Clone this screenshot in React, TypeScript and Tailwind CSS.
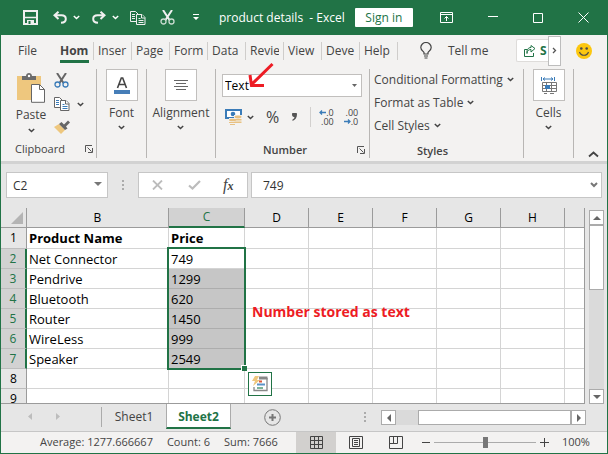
import type { ReactNode } from "react";

const rows = [
  { n: 1, b: "Product Name", c: "Price" },
  { n: 2, b: "Net Connector", c: "749" },
  { n: 3, b: "Pendrive", c: "1299" },
  { n: 4, b: "Bluetooth", c: "620" },
  { n: 5, b: "Router", c: "1450" },
  { n: 6, b: "WireLess", c: "999" },
  { n: 7, b: "Speaker", c: "2549" },
  { n: 8, b: "", c: "" },
  { n: 9, b: "", c: "" },
];
const emptyColumns = ["D", "E", "F", "G", "H", ""];
const menuTabs = ["Hom", "Inser", "Page", "Form", "Data", "Revie", "View", "Deve", "Help"];

function Chevron({ className = "" }: { className?: string }) {
  return (
    <svg className={`shrink-0 ${className}`} width="7" height="5" viewBox="0 0 7 5" fill="none" stroke="currentColor" strokeWidth="1.5">
      <path d="M.8 1l2.7 2.5L6.2 1" />
    </svg>
  );
}

function Launcher() {
  return (
    <button aria-label="More options" className="text-[#555]">
      <svg width="8" height="8" viewBox="0 0 8 8" fill="none" stroke="currentColor">
        <path d="M.5 7V.5H7M2.5 2.5l4 4M7.5 3v4.5H3" />
      </svg>
    </button>
  );
}

function Dots() {
  return (
    <svg width="2" height="11" viewBox="0 0 2 11" fill="#ababab">
      <path d="M0 0h2v2H0zM0 4h2v2H0zM0 8h2v2H0z" />
    </svg>
  );
}

function Undo({ flip = false }: { flip?: boolean }) {
  return (
    <svg className={flip ? "-scale-x-100" : ""} width="14" height="13" viewBox="0 0 14 13" fill="none" stroke="#f0f0f0" strokeWidth="2">
      <path d="M5.500.7L1.500 4.300l4 3.700M2 4.300h6.500c3 0 4.300 1.600 4.300 3.600S11.300 11.500 8 11.800" />
    </svg>
  );
}

function Scissors({ blades, rings }: { blades: string; rings: string }) {
  return (
    <svg width="15" height="15" viewBox="0 0 15 15" fill="none">
      <path d="M3 0l6.500 10M12 0L5.500 10" stroke={blades} strokeWidth="2" />
      <circle cx="3.500" cy="11.500" r="2.500" stroke={rings} strokeWidth="1.300" />
      <circle cx="11.500" cy="11.500" r="2.500" stroke={rings} strokeWidth="1.300" />
    </svg>
  );
}

function Copy({ line, text, paper }: { line: string; text: string; paper: string }) {
  return (
    <svg width="16" height="14" viewBox="0 0 16 14" fill={paper} stroke={line}>
      <path d="M.5.500h5l2.500 2.500v7.500H.500z" />
      <path d="M6.500 3.500h5.500l3 3v7H6.500z" />
      <path d="M11.500 3.500v3.500H15" />
      <path d="M2 3.500h3M2 5.500h3M2 7.500h3M8.500 7.500h2M8.500 9.500h5M8.500 11.500h5" stroke={text} />
    </svg>
  );
}

function TitleBar() {
  return (
    <header className="flex h-[35px] shrink-0 items-center bg-[#217346] text-white">
      <div className="flex w-[218px] shrink-0 items-center pl-[22px]">
        <button aria-label="Save">
          <svg width="15" height="15" viewBox="0 0 15 15" fill="none" stroke="#f0f0f0" strokeWidth="2">
            <path d="M1 1h13v13H1z" />
            <path d="M1 7.500h13" strokeWidth="1.500" />
            <path d="M4 14v-4h7v4z" fill="#f0f0f0" stroke="none" />
            <path d="M5.500 11h2v3h-2z" fill="#217346" stroke="none" />
          </svg>
        </button>
        <button aria-label="Undo" className="ml-[15px]"><Undo /></button>
        <Chevron className="ml-1.5" />
        <button aria-label="Redo" className="ml-3"><Undo flip /></button>
        <Chevron className="ml-1.5" />
        <button aria-label="Copy" className="ml-[11px]"><Copy line="#f0f0f0" text="#f0f0f0" paper="#217346" /></button>
        <button aria-label="Cut" className="ml-[14px]"><Scissors blades="#f0f0f0" rings="#c9dcd0" /></button>
        <button aria-label="Customize toolbar" className="ml-[18px]">
          <svg width="6" height="7" viewBox="0 0 6 7" fill="#fff"><path d="M0 0h6v1H0zM0 3h6L3 6z" /></svg>
        </button>
      </div>
      <h1 className="text-[12px] whitespace-pre">product details  - Excel</h1>
      <button className="ml-[10px] h-[19px] w-[58px] shrink-0 rounded-[1px] bg-white text-[12px] leading-[19px] text-[#217346]">Sign in</button>
      <div className="ml-auto flex shrink-0 items-center pr-[18px]">
        <button aria-label="Ribbon display options">
          <svg width="13" height="11" viewBox="0 0 13 11" fill="none" stroke="#fff"><path d="M.5.500h12v10H.500zM.500 2.500h12M6.500 9V4.500M4.500 6.500l2-2 2 2" /></svg>
        </button>
        <button aria-label="Minimize" className="ml-[35px]">
          <svg width="10" height="11" viewBox="0 0 10 11" stroke="#fff"><path d="M0 4.500h10" /></svg>
        </button>
        <button aria-label="Maximize" className="ml-[35px]">
          <svg width="10" height="10" viewBox="0 0 10 10" fill="none" stroke="#fff"><path d="M.5.500h9v9H.500z" /></svg>
        </button>
        <button aria-label="Close" className="ml-[35px]">
          <svg width="11" height="11" viewBox="0 0 11 11" stroke="#fff"><path d="M.5.500l10 10M10.500.500l-10 10" /></svg>
        </button>
      </div>
    </header>
  );
}

function MenuBar() {
  return (
    <nav className="flex h-[31px] shrink-0 items-center bg-[#f3f2f1] text-[12px] text-[#444]">
      <button className="w-[55px] shrink-0 pl-[17px] text-left">File</button>
      <div className="flex shrink-0">
        {menuTabs.map((tab, i) => (
          <button key={tab} className="flex h-[18px] w-[38px] shrink-0 items-center border-r border-[#cfcdcb] px-1 whitespace-nowrap">
            <span className={i === 0 ? "h-6 w-[29px] overflow-hidden border-b-3 border-[#217346] text-left leading-[24px] font-bold" : "w-[30px] overflow-hidden text-left"}>{tab}</span>
          </button>
        ))}
      </div>
      <svg className="ml-[22px] shrink-0" width="12" height="17" viewBox="0 0 12 17" fill="none" stroke="#444" strokeWidth="1.200">
        <path d="M4 12V10.500C3 9 .8 8 .8 5.500a5.200 5 0 0 1 10.400 0C11.200 8 9 9 8 10.500V12zM4 14h4M4.500 16h3" />
      </svg>
      <button className="ml-4 shrink-0">Tell me</button>
      <div className="ml-auto flex shrink-0 items-center pr-[15px]">
        <button className="flex h-[23px] w-8 items-center gap-1 overflow-hidden rounded-l-[2px] border border-r-0 border-[#dedcda] bg-white pl-[7px] font-bold text-[#217346]">
          <svg className="shrink-0" width="12" height="12" viewBox="0 0 12 12" fill="none" stroke="currentColor">
            <path d="M3 4.500H.500v7h9V8M3 8.500c0-3 2-4 4-4V7l4-3.500L7 .5v2C4 2.500 2.500 5 3 8.500z" />
          </svg>
          S
        </button>
        <button aria-label="Scroll tabs" className="flex h-[30px] w-[13px] items-center justify-center border border-[#bdbdbd] bg-white">
          <svg width="5" height="7" viewBox="0 0 5 7" fill="none" stroke="#555" strokeWidth="1.300"><path d="M1 1l2.500 2.500L1 6" /></svg>
        </button>
        <svg className="ml-[15px]" width="16" height="16" viewBox="0 0 16 16">
          <circle cx="8" cy="8" r="8" fill="#fcc70f" />
          <circle cx="5.300" cy="5.500" r="1.300" fill="#4a4a4a" />
          <circle cx="10.700" cy="5.500" r="1.300" fill="#4a4a4a" />
          <path d="M3.500 9c1.500 4.300 7.500 4.300 9 0" fill="none" stroke="#4a4a4a" strokeWidth="1.200" />
        </svg>
      </div>
    </nav>
  );
}

function LargeButton({ label, children }: { label: string; children: ReactNode }) {
  return (
    <button className="flex flex-col items-center">
      <span className="flex size-8 items-center justify-center border border-[#c1bfbd] bg-white">{children}</span>
      <span className="mt-[3px] leading-[17px]">{label}</span>
      <Chevron className="mt-1" />
    </button>
  );
}

function Ribbon() {
  return (
    <section className="flex h-[95px] shrink-0 bg-[#f3f2f1] pt-[3px] pb-[3px] text-[12px] text-[#444]">
      <div className="flex w-24 shrink-0 flex-col border-r border-[#b8b6b4]">
        <div className="flex flex-1 pl-[15px]">
          <button className="flex w-[30px] flex-col items-center pt-1">
            <svg width="28" height="30" viewBox="0 0 28 30">
              <path d="M0 3h24v24H0z" fill="#eec77e" />
              <path d="M5 7V3h4c0-4 6-4 6 0h4v4z" fill="#6b6b6b" />
              <circle cx="12" cy="3" r="1.200" fill="#fff" />
              <path d="M14.500 11.500h8l5 5v12.800h-13z" fill="#fff" stroke="#666" />
              <path d="M22.500 11.500v5h5" fill="none" stroke="#666" />
            </svg>
            <span className="mt-[3px] leading-[17px]">Paste</span>
            <Chevron className="mt-[5px]" />
          </button>
          <div className="ml-2 flex flex-col gap-[9px] pt-1">
            <button aria-label="Cut"><Scissors blades="#666" rings="#3b7cb8" /></button>
            <button aria-label="Copy" className="flex items-center gap-[7px]"><Copy line="#666" text="#3b7cb8" paper="#fff" /><Chevron /></button>
            <button aria-label="Format painter">
              <svg width="16" height="14" viewBox="0 0 16 14">
                <path d="M0 7l5-3 6 6-4 4z" fill="#eec77e" />
                <path d="M5 4l2.500-2L10 4.500 14 .5l2 2-4 4 1.500 2L11 10z" fill="#666" />
              </svg>
            </button>
          </div>
        </div>
        <div className="flex h-[18px] items-center justify-between pr-[3px] pl-3.5 text-[11px] leading-[16px]">Clipboard<Launcher /></div>
      </div>
      <div className="flex w-[50px] shrink-0 justify-center border-r border-[#b8b6b4]">
        <LargeButton label="Font">
          <svg width="16" height="17" viewBox="0 0 16 17">
            <path d="M3.500 11L7.300 1h1.400l3.800 10M5 7.500h6" fill="none" stroke="#444" strokeWidth="1.600" />
            <path d="M0 13h16v4H0z" fill="#467eb8" />
          </svg>
        </LargeButton>
      </div>
      <div className="flex w-[69px] shrink-0 justify-center border-r border-[#b8b6b4]">
        <LargeButton label="Alignment">
          <svg width="14" height="11" viewBox="0 0 14 11" stroke="#666"><path d="M0 .5h14M2 3.500h10M0 6.500h14M2 9.500h10" /></svg>
        </LargeButton>
      </div>
      <div className="flex w-[154px] shrink-0 flex-col border-r border-[#b8b6b4] pt-[5px]">
        <div className="relative ml-1.5 w-[140px]">
          <select aria-label="Number format" className="block h-[23px] w-full appearance-none rounded-none border border-[#c1bfbd] bg-white pl-0.5 text-[12px] text-black">
            <option>Text</option>
          </select>
          <svg className="pointer-events-none absolute top-[10px] right-[5px]" width="5" height="3" viewBox="0 0 5 3" fill="#666"><path d="M0 0h5L2.500 3z" /></svg>
          <svg className="pointer-events-none absolute -top-3 left-[25px]" width="28" height="28" viewBox="0 0 28 28" fill="none" stroke="#ed1c24" strokeWidth="3">
            <path d="M25.500 2L5 22M3 13l1.500 10.500L17 23.500" />
          </svg>
        </div>
        <div className="mt-2 flex h-6 items-center pl-[9px]">
          <button aria-label="Accounting format">
            <svg width="17" height="16" viewBox="0 0 17 16">
              <path d="M1 1h15v8H1z" fill="#fff" stroke="#3b7cb8" strokeWidth="2" />
              <circle cx="8" cy="5" r="2.300" fill="#3b7cb8" />
              <path d="M9 6h8v10H9zM4 9h9v7H4z" fill="#f3f2f1" />
              <g fill="#e8c182"><ellipse cx="13" cy="8" rx="3.500" ry="1.400" /><path d="M9.500 10h7v1.500h-7zM9.500 12.500h7V14h-7z" /><ellipse cx="7.500" cy="11" rx="3.500" ry="1.300" /><path d="M4 13h7v1H4zM5 15h5v1H5z" /></g>
            </svg>
          </button>
          <Chevron className="ml-[5px]" />
          <button className="ml-3 text-[16px]" aria-label="Percent style">%</button>
          <button aria-label="Comma style" className="ml-[13px]">
            <svg width="5" height="8" viewBox="0 0 5 8" fill="#555"><path d="M0 1.500a2.400 2.400 0 0 1 5 0C5 5 3 7 .5 8V6.500C2 5.500 2.500 5 2.300 4 1 4.300 0 3 0 1.500z" /></svg>
          </button>
          <span className="ml-[13px] h-5 w-px bg-[#d2d0ce]" />
          <button aria-label="Increase decimal" className="ml-2 flex flex-col items-end text-[9px] leading-[9px]">
            <span className="flex items-center"><svg width="7" height="5" viewBox="0 0 7 5" fill="none" stroke="#3b7cb8" strokeWidth="1.300"><path d="M7 2.500H1M3 .5l-2 2 2 2" /></svg>.0</span>
            <span>.00</span>
          </button>
          <button aria-label="Decrease decimal" className="ml-[10px] flex flex-col items-end text-[9px] leading-[9px]">
            <span>.00</span>
            <span className="flex items-center"><svg width="7" height="5" viewBox="0 0 7 5" fill="none" stroke="#3b7cb8" strokeWidth="1.300"><path d="M0 2.500h6M4 .5l2 2-2 2" /></svg>.0</span>
          </button>
        </div>
        <div className="mt-auto flex h-4 items-center pr-1 pl-[47px] text-[11px] leading-[16px] font-semibold">
          <span className="flex-1">Number</span><Launcher />
        </div>
      </div>
      <div className="flex w-[154px] shrink-0 flex-col border-r border-[#b8b6b4]">
        <div className="flex flex-col items-start gap-[6px] pt-0.5 pl-1">
          {["Conditional Formatting", "Format as Table", "Cell Styles"].map((label) => (
            <button key={label} className="flex items-center gap-1 leading-[17px] whitespace-nowrap">{label}<Chevron /></button>
          ))}
        </div>
        <div className="mt-auto pr-7 text-center text-[11px] leading-[14px] font-semibold">Styles</div>
      </div>
      <div className="flex w-[50px] shrink-0 justify-center border-r border-[#b8b6b4]">
        <LargeButton label="Cells">
          <svg width="16" height="17" viewBox="0 0 16 17" fill="none">
            <path d="M.5 0v4M13.500 0v4M2 2h10M4 .500L2 2l2 1.500M10 .500L12 2l-2 1.500" stroke="#3b7cb8" />
            <path d="M1.500 5.500h14v9h-14zM1.500 8.500h14M1.500 11.500h14M5.500 5v9M10.500 5v9M3 16.500h3M9 16.500h4" stroke="#777" />
            <path d="M4 8h5v4H4z" fill="#3b7cb8" />
          </svg>
        </LargeButton>
      </div>
      <div className="flex flex-1 items-end justify-end pr-2">
        <button aria-label="Collapse ribbon">
          <svg width="11" height="8" viewBox="0 0 11 8" fill="none" stroke="#444" strokeWidth="1.800"><path d="M1 6.500l4.500-4 4.500 4" /></svg>
        </button>
      </div>
    </section>
  );
}

function FormulaBar() {
  return (
    <div className="flex h-[47px] shrink-0 items-start border-t-3 border-[#d2d2d2] bg-[#e6e6e6] pt-2 pr-[5px] pl-[5px] text-[12px] text-[#333]">
      <div className="relative w-[102px] shrink-0">
        <input aria-label="Name box" defaultValue="C2" className="block h-[26px] w-full border border-[#c6c6c6] bg-white px-1.5 outline-none" />
        <svg className="absolute top-[10px] right-[6px]" width="8" height="4" viewBox="0 0 8 4" fill="#777"><path d="M0 0h8L4 4z" /></svg>
      </div>
      <div className="flex h-[26px] w-[30px] shrink-0 items-center justify-center"><Dots /></div>
      <div className="flex h-[26px] w-[110px] shrink-0 items-center border border-[#c6c6c6] bg-white pl-[13px]">
        <button aria-label="Cancel"><svg width="11" height="10" viewBox="0 0 11 10" stroke="#bcbcbc" strokeWidth="1.800"><path d="M1 .5l9 9M10 .5l-9 9" /></svg></button>
        <button aria-label="Enter" className="ml-[25px]"><svg width="13" height="10" viewBox="0 0 13 10" fill="none" stroke="#bcbcbc" strokeWidth="2.200"><path d="M1 5.500l3.500 3L12 1" /></svg></button>
        <button aria-label="Insert function" className="ml-[22px] font-['Liberation_Serif',serif] text-[16px] leading-none text-[#444] italic">f<span className="text-[12px] font-bold">x</span></button>
      </div>
      <div className="relative ml-[3px] flex-1">
        <input aria-label="Formula" defaultValue="749" className="block h-[26px] w-full border border-[#c6c6c6] bg-white pl-[11px] outline-none" />
        <svg className="absolute top-[10px] right-1" width="8" height="6" viewBox="0 0 8 6" fill="none" stroke="#777" strokeWidth="2"><path d="M1 1l3 3 3-3" /></svg>
      </div>
    </div>
  );
}

function Grid() {
  return (
    <div className="relative min-w-0 flex-1 overflow-hidden border-r border-b border-[#9b9b9b] bg-white">
      <table className="w-full table-fixed border-separate border-spacing-0 text-[13px] leading-[18px] text-black">
        <colgroup>
          <col className="w-[26px]" />
          <col className="w-[142px]" />
          <col className="w-[76px]" />
          <col className="w-16" />
          <col className="w-16" />
          <col className="w-16" />
          <col className="w-16" />
          <col className="w-16" />
          <col />
        </colgroup>
        <thead className="text-[12px]">
          <tr className="bg-[#e6e6e6]">
            <th className="h-5 border-r border-b border-[#9b9b9b] p-0">
              <svg className="ml-2.5" width="12" height="12" viewBox="0 0 12 12" fill="#b4b4b4"><path d="M12 0v12H0z" /></svg>
            </th>
            {["B", "C", ...emptyColumns].map((name, i) => (
              <th
                key={i}
                scope="col"
                className={
                  name === "C"
                    ? "h-5 border-r border-b-2 border-r-[#9b9b9b] border-b-[#217346] bg-[#d2d2d2] p-0 font-normal text-[#217346]"
                    : name
                      ? "h-5 border-r border-b border-[#9b9b9b] p-0 font-normal"
                      : "h-5 border-b border-[#9b9b9b] p-0"
                }
              >
                {name}
              </th>
            ))}
          </tr>
        </thead>
        <tbody>
          {rows.map((row) => {
            const selected = row.n >= 2 && row.n <= 7;
            const filled = row.n >= 3 && row.n <= 7;
            const height = row.n === 1 ? "h-[21px]" : "h-5";
            const weight = row.n === 1 ? "font-bold" : "";
            return (
              <tr key={row.n}>
                <th
                  scope="row"
                  className={`${height} p-0 text-[12px] font-normal border-b border-b-[#bdbdbd] ${selected ? "border-r-2 border-r-[#217346] bg-[#d2d2d2] text-[#217346]" : "border-r border-r-[#9b9b9b] bg-[#e6e6e6]"}`}
                >
                  {row.n}
                </th>
                <td className={`${height} ${weight} border-r border-b border-[#d4d4d4] py-0 pr-0 pl-0.5 whitespace-nowrap`}>{row.b}</td>
                <td className={`${height} ${weight} border-r border-b py-0 pr-0 pl-0.5 ${filled ? "border-[#adadad] bg-[#c6c6c6]" : "border-[#d4d4d4]"}`}>{row.c}</td>
                {emptyColumns.map((name) => (
                  <td key={name} className={name ? "border-r border-b border-[#d4d4d4] p-0" : "border-b border-[#d4d4d4] p-0"} />
                ))}
              </tr>
            );
          })}
        </tbody>
      </table>
      <div className="pointer-events-none absolute top-[39px] left-[166px] h-[123px] w-[79px] border-2 border-[#217346]">
        <span className="absolute -right-[3px] -bottom-[3px] size-[6px] border-t border-l border-white bg-[#217346]" />
      </div>
      <p className="absolute top-[94px] left-[251px] text-[14px] leading-[20px] font-bold whitespace-nowrap text-[#ed1c24]">Number stored as text</p>
      <button aria-label="Quick analysis" className="absolute top-[164px] left-[247px] flex size-6 items-center justify-center border border-[#217346] bg-white">
        <svg width="16" height="16" viewBox="0 0 16 16" fill="none">
          <path d="M7 2h8.500" stroke="#888" strokeWidth="3" />
          <path d="M15 2v12.500H2V11" stroke="#888" strokeWidth="1.300" />
          <path d="M3 0h4L5 4h3L1 10l2-5H0z" fill="#eec77e" />
          <path d="M7 5.500h3" stroke="#d9583b" strokeWidth="2" />
          <path d="M5 8.500h8" stroke="#5b93c8" strokeWidth="2" />
          <path d="M5 12h6" stroke="#7db598" strokeWidth="2" />
        </svg>
      </button>
    </div>
  );
}

function VerticalScrollbar() {
  return (
    <div className="flex w-[22px] shrink-0 pt-0.5 pr-[3px] pl-[4px]">
      <div className="flex w-[15px] flex-col bg-[#dadada]">
        <button aria-label="Scroll up" className="flex h-[15px] shrink-0 items-center justify-center border border-[#ababab] bg-white">
          <svg width="8" height="4" viewBox="0 0 8 4" fill="#666"><path d="M0 4h8L4 0z" /></svg>
        </button>
        <div className="h-[65px] border border-[#ababab] bg-white" />
        <button aria-label="Scroll down" className="mt-auto flex h-[15px] shrink-0 items-center justify-center border border-[#ababab] bg-white">
          <svg width="8" height="4" viewBox="0 0 8 4" fill="#666"><path d="M0 0h8L4 4z" /></svg>
        </button>
      </div>
    </div>
  );
}

function SheetBar() {
  return (
    <div className="flex h-[27px] shrink-0 items-start bg-[#e6e6e6] text-[12px] text-[#444]">
      <div className="flex h-[25px] w-[100px] shrink-0 items-center gap-6 pl-[27px]">
        <button aria-label="Previous sheet"><svg width="4" height="7" viewBox="0 0 4 7" fill="#bdbdbd"><path d="M4 0v7L0 3.500z" /></svg></button>
        <button aria-label="Next sheet"><svg width="4" height="7" viewBox="0 0 4 7" fill="#bdbdbd"><path d="M0 0v7l4-3.500z" /></svg></button>
      </div>
      <button className="mt-[3px] h-5 w-[65px] shrink-0 border-l border-[#ababab] leading-[20px]">Sheet1</button>
      <button className="-mt-px h-[26px] w-[65px] shrink-0 border-x border-b-2 border-x-[#ababab] border-b-[#217346] bg-white pt-1 font-bold text-[#217346]">Sheet2</button>
      <button aria-label="New sheet" className="mt-[5px] ml-[33px] shrink-0">
        <svg width="17" height="17" viewBox="0 0 17 17" fill="none" stroke="#777"><circle cx="8.500" cy="8.500" r="7.800" /><path d="M8.500 5v7M5 8.500h7" strokeWidth="2" /></svg>
      </button>
      <div className="mt-2 ml-auto"><Dots /></div>
      <div className="mt-[6px] mr-[21px] ml-[15px] flex h-[15px] w-[205px] shrink-0 bg-[#dadada]">
        <button aria-label="Scroll left" className="flex w-[15px] items-center justify-center border border-[#ababab] bg-white"><svg width="4" height="8" viewBox="0 0 4 8" fill="#666"><path d="M4 0v8L0 4z" /></svg></button>
        <div className="ml-[22px] flex-1 border border-[#ababab] bg-white" />
        <button aria-label="Scroll right" className="flex w-[15px] items-center justify-center border border-[#ababab] bg-white"><svg width="4" height="8" viewBox="0 0 4 8" fill="#666"><path d="M0 0v8l4-4z" /></svg></button>
      </div>
    </div>
  );
}

function StatusBar() {
  return (
    <footer className="flex h-[22px] shrink-0 items-center border-t border-[#c6c6c6] bg-[#f3f2f1] text-[11px] text-[#444]">
      <div className="flex flex-1 gap-[14px] pl-[39px] whitespace-nowrap">
        <span>Average: 1277.666667</span><span>Count: 6</span><span>Sum: 7666</span>
      </div>
      <div className="flex shrink-0 self-stretch">
        <button aria-label="Normal view" className="flex w-10 items-center justify-center bg-[#d2d0ce]">
          <svg width="13" height="13" viewBox="0 0 13 13" fill="none" stroke="#444"><path d="M.5.500h12v12H.500zM.500 4.500h12M.500 8.500h12M4.500.500v12M8.500.500v12" /></svg>
        </button>
        <button aria-label="Page layout view" className="flex w-10 items-center justify-center">
          <svg width="14" height="13" viewBox="0 0 14 13" fill="none" stroke="#444"><path d="M.5.500h13v12H.500zM3.500 2.500h7v8h-7zM5 4.500h4M5 6.500h4M5 8.500h4" /></svg>
        </button>
        <button aria-label="Page break view" className="flex w-10 items-center justify-center">
          <svg width="14" height="13" viewBox="0 0 14 13" fill="none" stroke="#444"><path d="M.5.500h13v12H.500zM.500 7.500h8v-7M4.500.500v7" /></svg>
        </button>
      </div>
      <button aria-label="Zoom out" className="ml-[6px]"><svg width="8" height="9" viewBox="0 0 8 9" stroke="#444"><path d="M0 4.500h8" /></svg></button>
      <input
        type="range"
        aria-label="Zoom"
        min="0"
        max="100"
        defaultValue="50"
        className="ml-1 h-3 w-[102px] shrink-0 appearance-none bg-[linear-gradient(#ababab,#ababab)] bg-[length:100%_1px] bg-center bg-no-repeat [&::-webkit-slider-thumb]:h-[11px] [&::-webkit-slider-thumb]:w-[5px] [&::-webkit-slider-thumb]:appearance-none [&::-webkit-slider-thumb]:bg-[#777]"
      />
      <button aria-label="Zoom in" className="ml-1"><svg width="9" height="9" viewBox="0 0 9 9" stroke="#444"><path d="M0 4.500h9M4.500 0v9" /></svg></button>
      <span className="w-[58px] shrink-0 pl-[13px]">100%</span>
    </footer>
  );
}

export default function App() {
  return (
    <div className="flex h-screen flex-col overflow-hidden border-x border-b border-[#217346] bg-[#e6e6e6] font-['Open_Sans','Noto_Sans',sans-serif]">
      <TitleBar />
      <MenuBar />
      <Ribbon />
      <FormulaBar />
      <main className="flex min-h-0 flex-1">
        <Grid />
        <VerticalScrollbar />
      </main>
      <SheetBar />
      <StatusBar />
    </div>
  );
}
